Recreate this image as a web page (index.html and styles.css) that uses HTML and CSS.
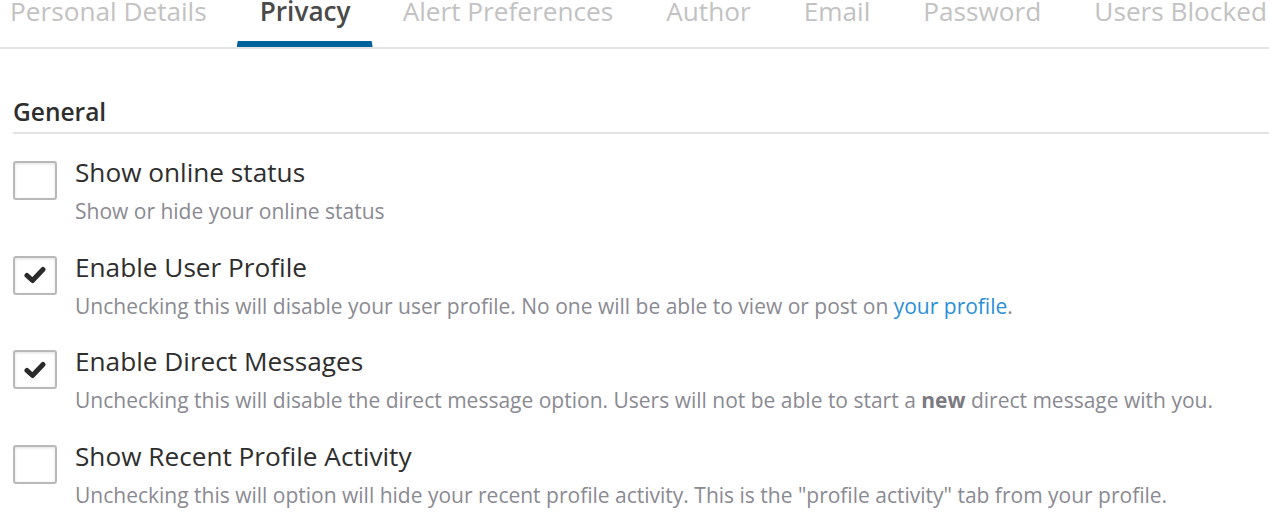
FILE: index.html
```html
<!DOCTYPE html>
<html lang="en">
<head>
<meta charset="utf-8">
<title>Privacy</title>
<link rel="stylesheet" href="styles.css">
</head>
<body>
<div class="page">
  <nav class="tabs">
    <a class="tab">Personal Details</a>
    <a class="tab active">Privacy</a>
    <a class="tab">Alert Preferences</a>
    <a class="tab">Author</a>
    <a class="tab">Email</a>
    <a class="tab">Password</a>
    <a class="tab">Users Blocked</a>
  </nav>

  <section class="section">
    <h2 class="section-title">General</h2>

    <div class="option">
      <span class="checkbox"></span>
      <div class="option-text">
        <div class="option-title">Show online status</div>
        <div class="option-desc">Show or hide your online status</div>
      </div>
    </div>

    <div class="option">
      <span class="checkbox checked"><svg viewBox="0 0 22 18" width="22" height="18"><polyline points="3,9.5 8.5,14.5 19,3.5" /></svg></span>
      <div class="option-text">
        <div class="option-title">Enable User Profile</div>
        <div class="option-desc">Unchecking this will disable your user profile. No one will be able to view or post on <a class="link">your profile</a>.</div>
      </div>
    </div>

    <div class="option">
      <span class="checkbox checked"><svg viewBox="0 0 22 18" width="22" height="18"><polyline points="3,9.5 8.5,14.5 19,3.5" /></svg></span>
      <div class="option-text">
        <div class="option-title">Enable Direct Messages</div>
        <div class="option-desc">Unchecking this will disable the direct message option. Users will not be able to start a <b>new</b> direct message with you.</div>
      </div>
    </div>

    <div class="option">
      <span class="checkbox"></span>
      <div class="option-text">
        <div class="option-title">Show Recent Profile Activity</div>
        <div class="option-desc">Unchecking this will option will hide your recent profile activity. This is the "profile activity" tab from your profile.</div>
      </div>
    </div>
  </section>
</div>
</body>
</html>
```

FILE: styles.css
```css
* { box-sizing: border-box; }
html, body { margin: 0; padding: 0; background: #fff; }
body {
  font-family: "Open Sans", "Noto Sans", sans-serif;
  color: #333;
  overflow: hidden;
}
.page { padding-left: 13px; }

.tabs {
  display: flex;
  gap: 7px;
  margin: -6px 0 0 -26px;
  border-bottom: 2px solid #e3e3e3;
  white-space: nowrap;
}
.tab {
  position: relative;
  font-size: 26.2px;
  line-height: 35px;
  padding: 0 23px 18px;
  color: #c2c2c2;
}
.tab.active {
  color: #4a4a4a;
  font-weight: 600;
  padding-right: 22px;
}
.tab.active::after {
  content: "";
  position: absolute;
  left: 0; right: 0; bottom: 0;
  height: 6px;
  background: #00619b;
  clip-path: polygon(1px 0, calc(100% - 1px) 0, 100% 100%, 0 100%);
}

.section { padding-top: 46px; }
.section-title {
  margin: 0;
  font-size: 24.5px;
  font-weight: 600;
  line-height: 33px;
  padding-bottom: 4px;
  color: #2e2e2e;
  border-bottom: 2px solid #e3e3e3;
}

.option {
  display: flex;
  gap: 18px;
  margin-top: 22.7px;
}
.option:first-of-type { margin-top: 20px; }
.checkbox {
  flex: none;
  width: 44px;
  height: 39px;
  margin-top: 7px;
  border: 2px solid #b9b9b9;
  border-radius: 3px;
  box-shadow: inset 0 1px 3px rgba(0,0,0,0.12);
  display: flex;
  align-items: center;
  justify-content: center;
}
.checkbox svg polyline {
  fill: none;
  stroke: #2a2a2a;
  stroke-width: 5;
  stroke-linecap: round;
  stroke-linejoin: round;
}
.option-title {
  font-size: 26.2px;
  line-height: 36px;
  color: #2e2e2e;
}
.option-desc {
  margin-top: 6px;
  font-size: 21px;
  line-height: 30px;
  color: #8a8a92;
}
.option-desc b { font-weight: 700; color: #7a7a80; }
.link { color: #2b8fd6; text-decoration: none; }
```
